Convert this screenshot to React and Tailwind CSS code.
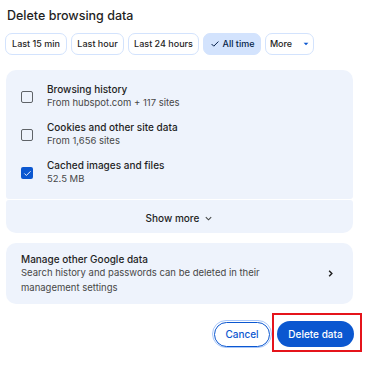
import React from "react";

function Check({ className = "" }) {
  return (
    <svg viewBox="0 0 16 16" className={className} fill="none" stroke="currentColor" strokeWidth="1.6" strokeLinecap="round" strokeLinejoin="round">
      <path d="M3 8.5l3 3 7-7" />
    </svg>
  );
}

function Chip({ children, selected, w }) {
  return (
    <div
      className={
        "h-[22px] flex items-center justify-center whitespace-nowrap rounded-[7px] border text-[9px] font-medium " +
        w +
        (selected
          ? " bg-[#d3e3fd] border-[#d3e3fd] text-[#041e49]"
          : " bg-white border-[#d3e3fd] text-[#1f1f1f]")
      }
    >
      {children}
    </div>
  );
}

function Row({ title, sub, checked }) {
  return (
    <div className="h-[38px] flex items-center pl-[15px]">
      <div className="w-[12px] mr-[14px] mt-[2px]">
        {checked ? (
          <div className="w-[12px] h-[12px] rounded-[2px] bg-[#0b57d0] flex items-center justify-center text-white">
            <Check className="w-[9px] h-[9px]" />
          </div>
        ) : (
          <div className="w-[12px] h-[12px] rounded-[2px] border-[1.5px] border-[#5f6368]" />
        )}
      </div>
      <div className="flex flex-col">
        <div className="text-[10px] font-medium text-[#1f1f1f] leading-[14px]">{title}</div>
        <div className="text-[9.5px] text-[#474747] leading-[14px]">{sub}</div>
      </div>
    </div>
  );
}

export default function App() {
  return (
    <div
      className="relative w-[369px] h-[367px] bg-white overflow-hidden"
      style={{ fontFamily: "Inter, 'Liberation Sans', sans-serif" }}
    >
      <div className="pl-[7px] pt-[8px] h-[33px] text-[12.5px] font-medium text-[#1f1f1f] leading-[16px]">
        Delete browsing data
      </div>
      <div className="flex gap-[4px] pl-[5px]">
        <Chip w="w-[62px]">Last 15 min</Chip>
        <Chip w="w-[53px]">Last hour</Chip>
        <Chip w="w-[71px]">Last 24 hours</Chip>
        <Chip w="w-[58px]" selected>
          <span className="flex items-center gap-[3px]">
            <Check className="w-[10px] h-[10px]" />
            All time
          </span>
        </Chip>
        <Chip w="w-[49px]">
          <span className="flex items-center gap-[11px]">
            More
            <svg viewBox="0 0 10 10" className="w-[6px] h-[6px] text-[#0b57d0]" fill="currentColor">
              <path d="M1 3h8L5 7z" />
            </svg>
          </span>
        </Chip>
      </div>

      <div className="mt-[15px] ml-[6px] w-[347px]">
        <div className="h-[129px] bg-[#eef3fc] rounded-t-[10px] rounded-b-[3px] pt-[7px]">
          <Row title="Browsing history" sub="From hubspot.com + 117 sites" />
          <Row title="Cookies and other site data" sub="From 1,656 sites" />
          <Row title="Cached images and files" sub="52.5 MB" checked />
        </div>
        <div className="mt-[1px] h-[33px] pt-[3px] bg-[#eef3fc] rounded-t-[3px] rounded-b-[10px] flex items-center justify-center gap-[5px] text-[10px] font-medium text-[#1f1f1f]">
          Show more
          <svg viewBox="0 0 10 10" className="w-[9px] h-[9px] text-[#444746]" fill="none" stroke="currentColor" strokeWidth="1.2">
            <path d="M2 3.5l3 3 3-3" />
          </svg>
        </div>
        <div className="mt-[10px] h-[61px] bg-[#eef3fc] rounded-[10px] flex items-center pl-[15px] pr-[18px]">
          <div className="flex-1 flex flex-col">
            <div className="text-[10px] font-medium text-[#1f1f1f] leading-[14.5px]">Manage other Google data</div>
            <div className="text-[9.5px] text-[#474747] leading-[14.5px] w-[260px]">
              Search history and passwords can be deleted in their management settings
            </div>
          </div>
          <svg viewBox="0 0 10 10" className="w-[9px] h-[9px] text-[#1f1f1f]" fill="none" stroke="currentColor" strokeWidth="1.6">
            <path d="M3.5 2l3 3-3 3" />
          </svg>
        </div>
      </div>

      <div className="mt-[16px] flex justify-end gap-[5px] pr-[15px]">
        <div className="h-[28px] px-[1px] flex items-center rounded-full border border-[#a8c7fa]">
          <div className="h-[25px] w-[56px] rounded-full border border-[#0b57d0] flex items-center justify-center text-[10px] font-medium text-[#0b57d0]">
            Cancel
          </div>
        </div>
        <div className="h-[26px] mt-[1px] w-[77px] rounded-full bg-[#0b57d0] flex items-center justify-center text-[10px] font-medium text-white">
          Delete data
        </div>
      </div>

      <div className="absolute left-[272px] top-[313px] w-[90px] h-[39px] border-2 border-[#e5141b]" />
    </div>
  );
}
